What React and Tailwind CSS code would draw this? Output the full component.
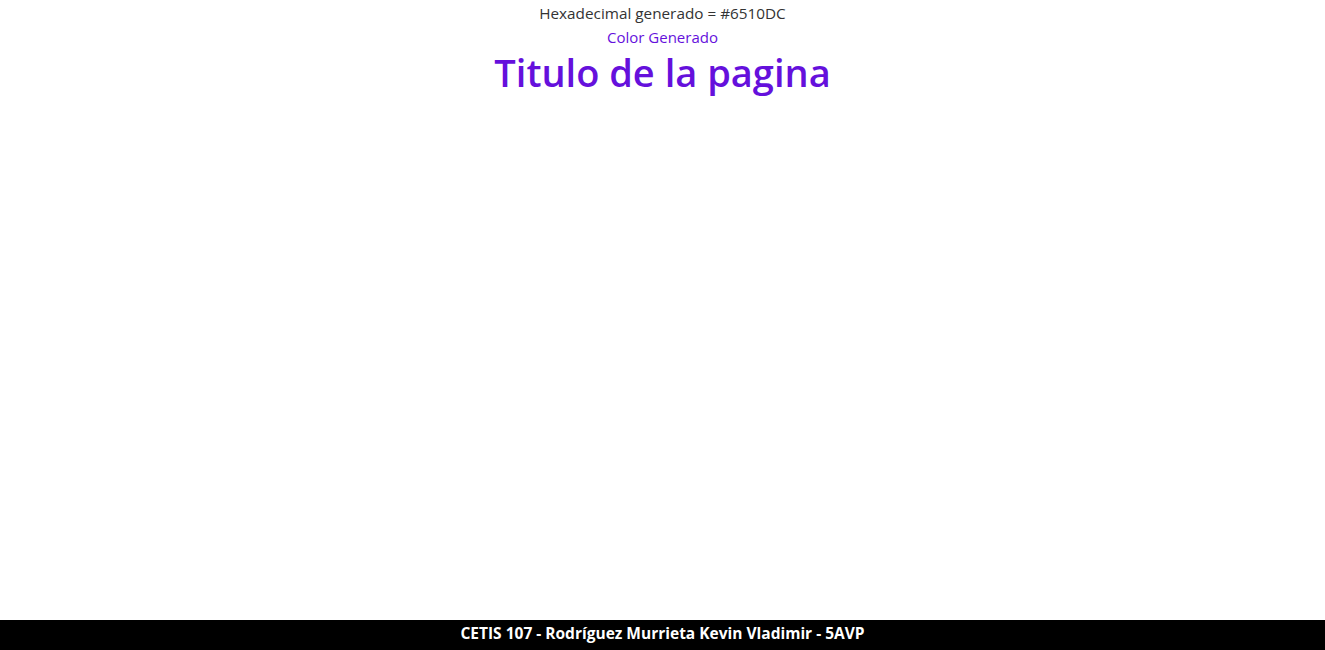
function App() {
  const hex = '#6510DC';

  return (
    <div className="h-screen flex flex-col bg-white font-['Open_Sans',sans-serif]">
      <main className="flex-1 flex flex-col items-center">
        <p className="mt-[3px] text-[15.3px] leading-[20px] text-[#333333]">
          Hexadecimal generado = {hex}
        </p>
        <p className="mt-[4px] text-[15px] leading-[20px] text-[#6510DC]">Color Generado</p>
        <h1 className="mt-[2px] text-[38px] leading-[46px] font-semibold text-[#6510DC]">
          Titulo de la pagina
        </h1>
      </main>

      {/* Pie de página */}
      <footer className="h-[30px] bg-black flex items-center justify-center">
        <span className="text-[15.5px] font-bold text-white leading-none -mt-[3px]">
          CETIS 107 - Rodríguez Murrieta Kevin Vladimir - 5AVP
        </span>
      </footer>
    </div>
  );
}

export default App;
